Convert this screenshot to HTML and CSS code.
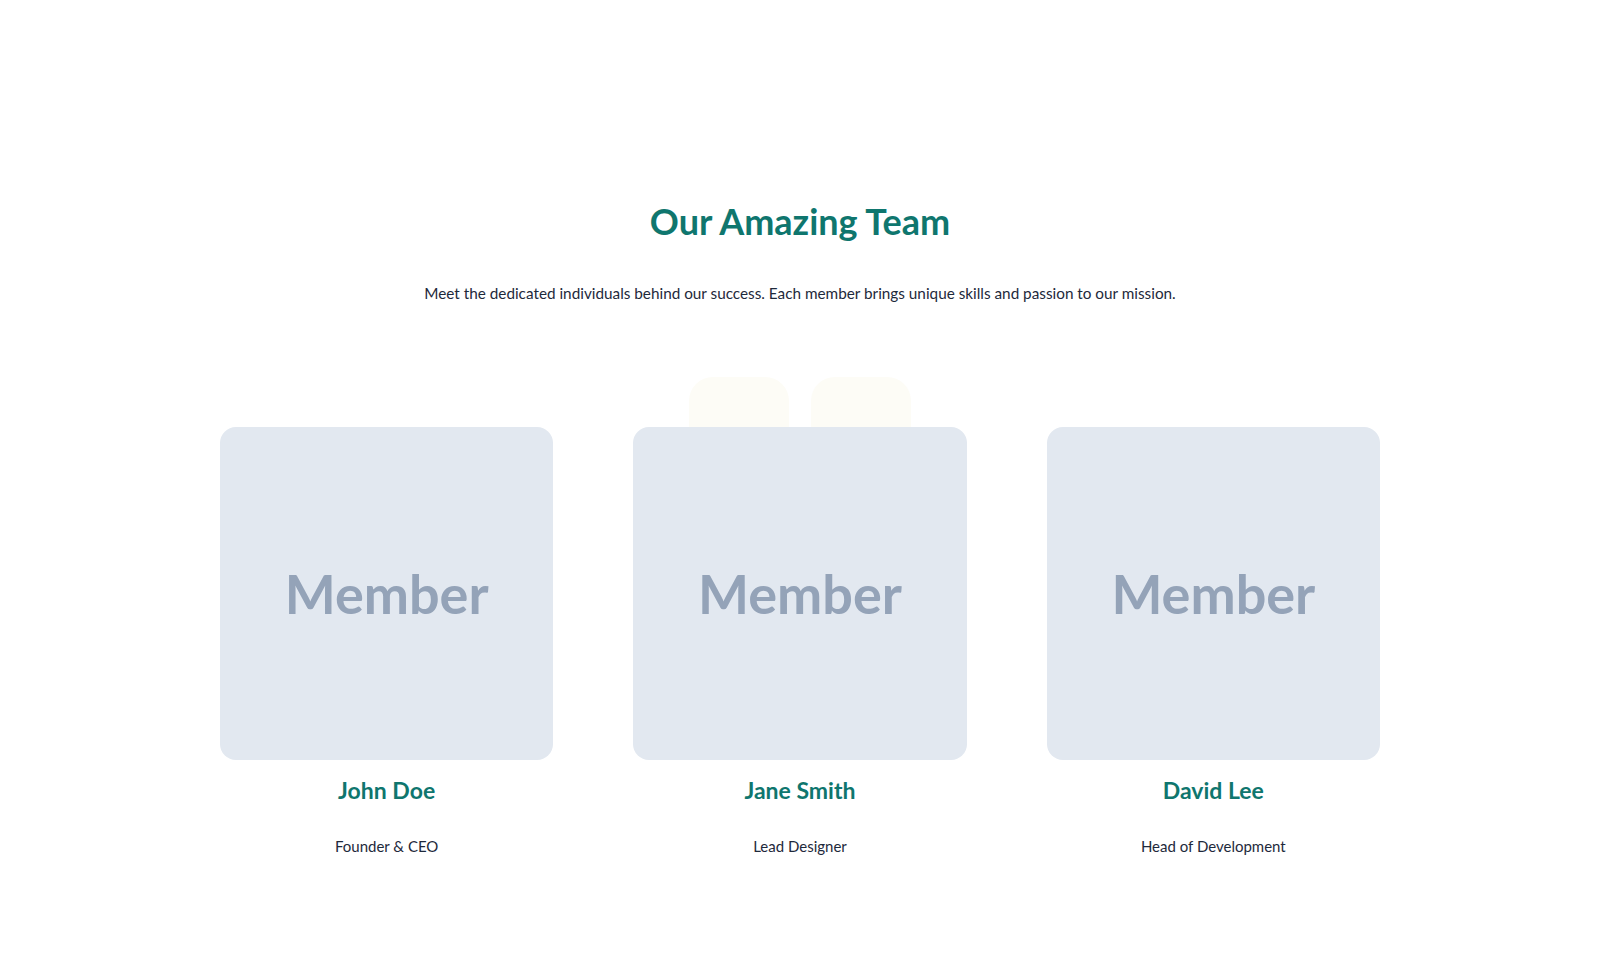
FILE: index.html
```html
<!DOCTYPE html>
<html lang="en">
<head>
    <meta charset="UTF-8">
    <meta name="viewport" content="width=device-width, initial-scale=1.0">
    <title>Our Team</title>
    <link rel="stylesheet" href="styles.css">
</head>
<body>
    <section class="team">
        <h2 class="team-title">Our Amazing Team</h2>
        <p class="team-intro">Meet the dedicated individuals behind our success. Each member brings unique skills and passion to our mission.</p>

        <div class="team-grid">
            <!-- decorative tabs peeking out behind the middle card -->
            <div class="team-deco">
                <span></span>
                <span></span>
            </div>

            <div class="member-card">
                <div class="member-photo">Member</div>
                <h3 class="member-name">John Doe</h3>
                <p class="member-role">Founder &amp; CEO</p>
            </div>
            <div class="member-card">
                <div class="member-photo">Member</div>
                <h3 class="member-name">Jane Smith</h3>
                <p class="member-role">Lead Designer</p>
            </div>
            <div class="member-card">
                <div class="member-photo">Member</div>
                <h3 class="member-name">David Lee</h3>
                <p class="member-role">Head of Development</p>
            </div>
        </div>
    </section>
</body>
</html>
```

FILE: styles.css
```css
body {
    font-family: 'Lato', sans-serif;
    margin: 0;
    padding: 0;
    background-color: #ffffff;
    color: #1e293b;
}
.team {
    max-width: 1160px;
    margin: 0 auto;
    padding: 199px 0 100px;
    text-align: center;
}
.team-title {
    font-size: 36px;
    line-height: 44px;
    font-weight: 700;
    color: #0f766e;
    margin: 0;
}
.team-intro {
    font-size: 15.3px;
    line-height: 24px;
    margin: 38px 0 0;
}
.team-grid {
    position: relative;
    display: grid;
    grid-template-columns: repeat(3, 1fr);
    gap: 80px;
    margin-top: 122px;
}
.team-deco {
    position: absolute;
    top: -50px;
    left: 50%;
    transform: translateX(-50%);
    display: flex;
    gap: 22px;
    z-index: 0;
}
.team-deco span {
    width: 100px;
    height: 120px;
    background-color: #fdfcf6;
    border-radius: 24px;
}
.member-card {
    position: relative;
    z-index: 1;
}
.member-photo {
    height: 333px;
    border-radius: 16px;
    background-color: #e2e8f0;
    color: #94a3b8;
    font-size: 54px;
    font-weight: 700;
    display: flex;
    align-items: center;
    justify-content: center;
}
.member-name {
    font-size: 23px;
    line-height: 30px;
    font-weight: 700;
    color: #0f766e;
    margin: 15px 0 0;
}
.member-role {
    font-size: 15px;
    line-height: 24px;
    margin: 29px 0 0;
}
```
